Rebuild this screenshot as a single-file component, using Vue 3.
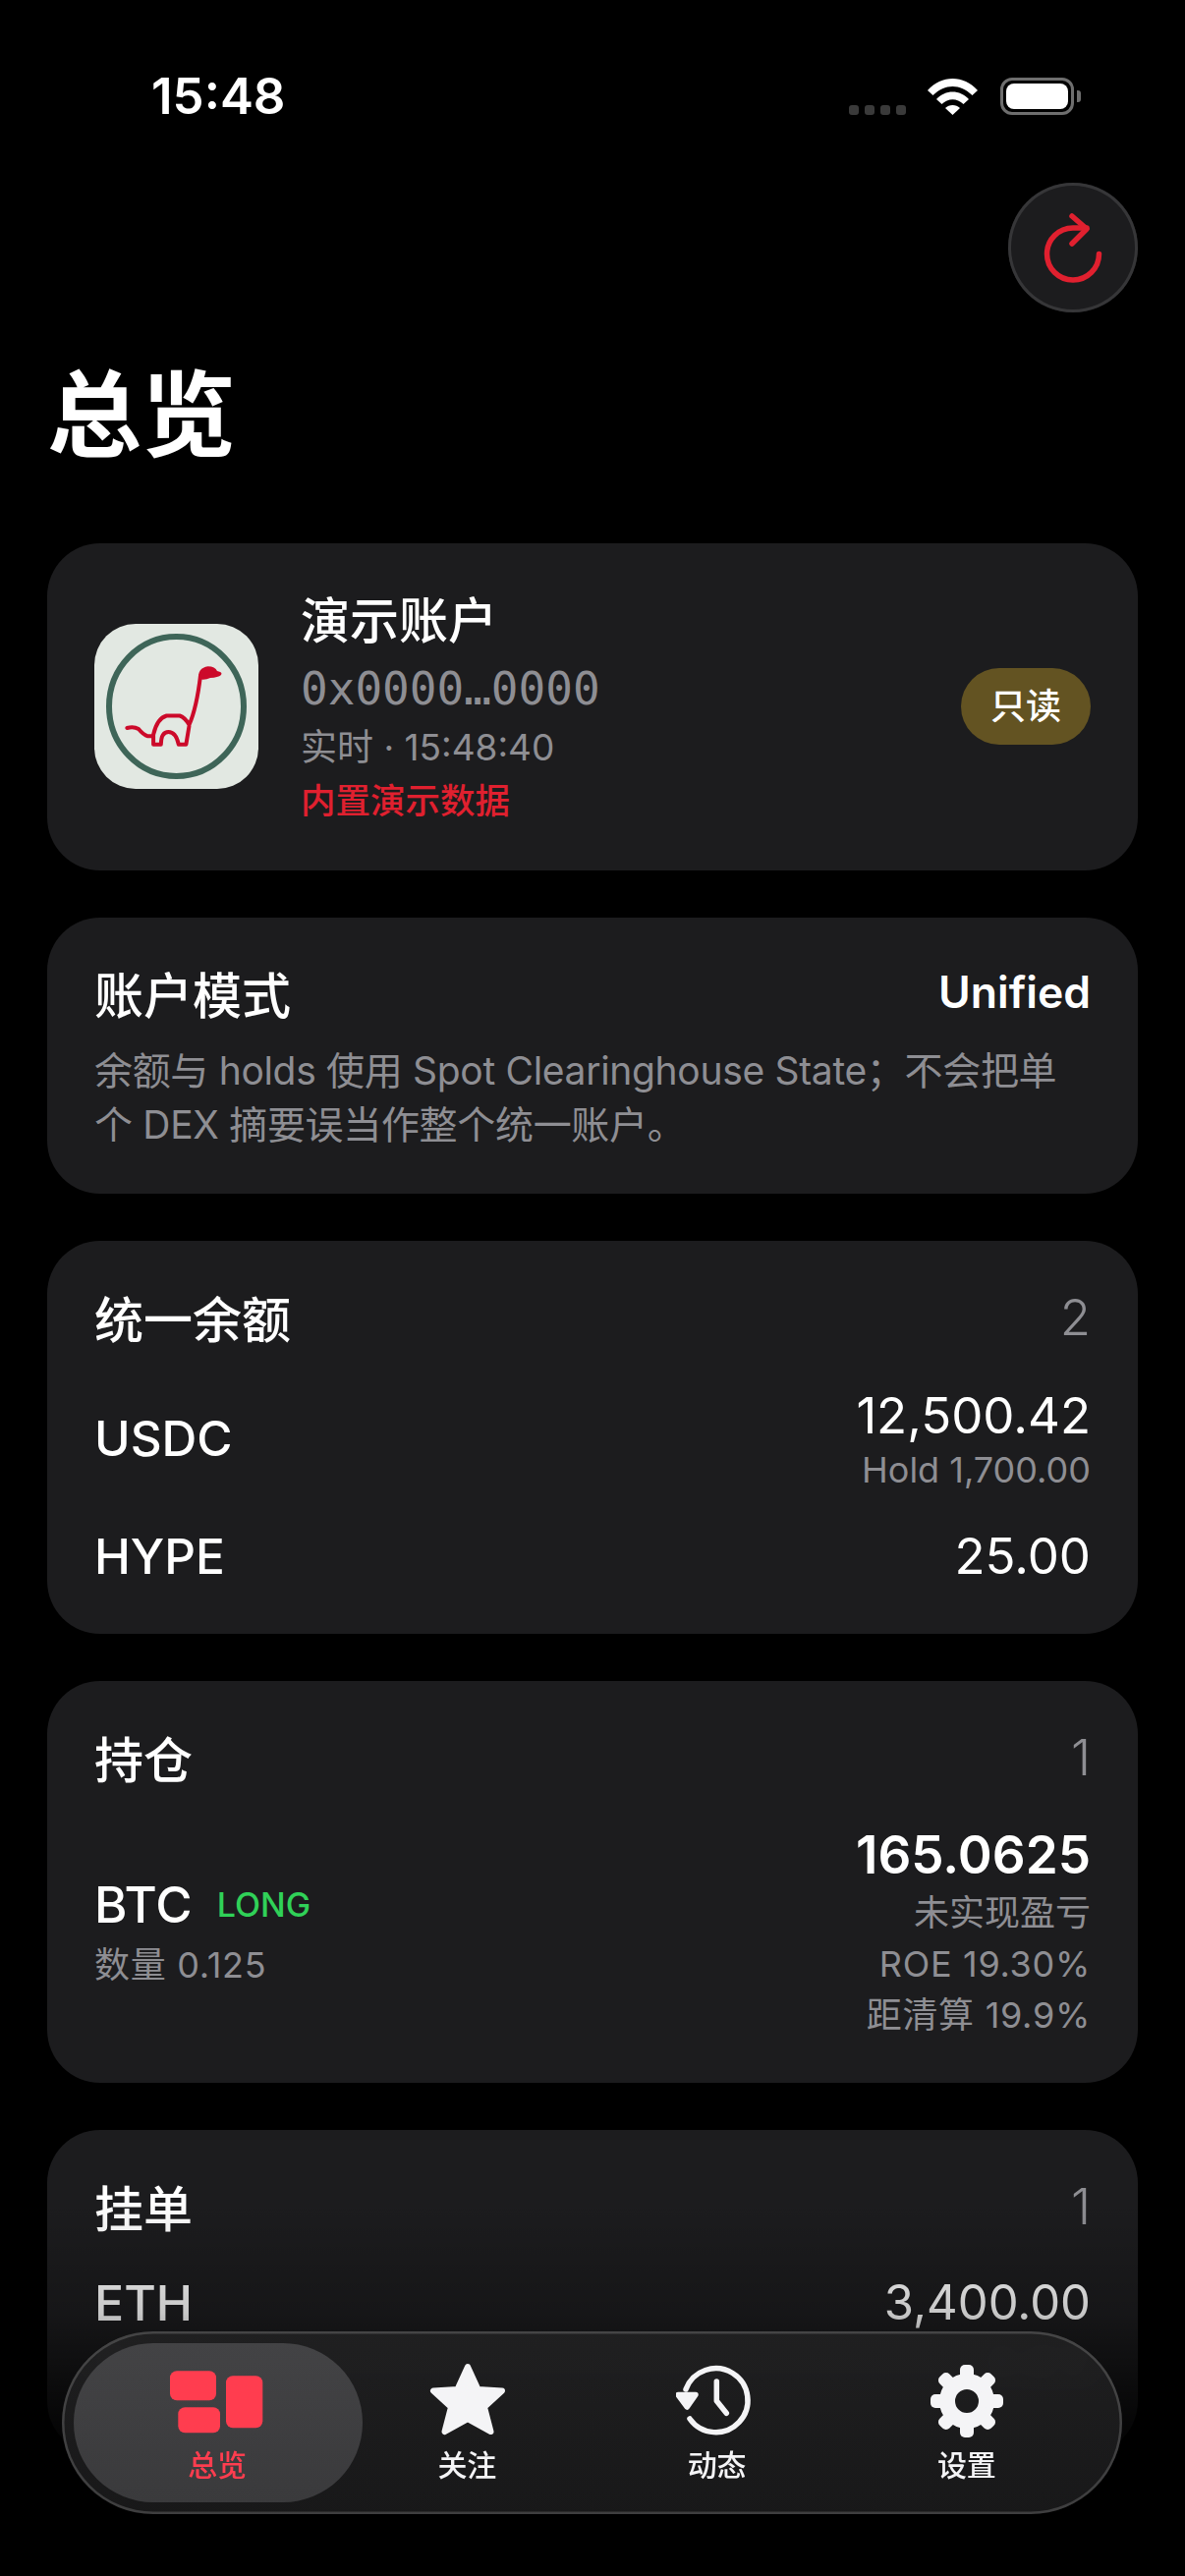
<script setup>
const tabs = [
  { label: '总览', icon: 'grid', active: true },
  { label: '关注', icon: 'star' },
  { label: '动态', icon: 'clock' },
  { label: '设置', icon: 'gear' },
]
const teeth = [0, 45, 90, 135, 180, 225, 270, 315]
</script>

<template>
  <div class="screen">
    <div class="status">
      <span class="time">15:48</span>
      <div class="status-right">
        <div class="dots"><i></i><i></i><i></i><i></i></div>
        <svg class="wifi" width="51" height="37" viewBox="0 0 51 37">
          <path d="M0 12C14-4 37-4 51 12L45.5 17C33 5 18 5 5.5 17Z" fill="#fff" />
          <path d="M9 21C18 11 33 11 42 21L36.5 26C30 19.5 21 19.5 14.5 26Z" fill="#fff" />
          <path d="M18 30C22 26 29 26 33 30L25.5 37Z" fill="#fff" />
        </svg>
        <div class="battery"><div class="battery-fill"></div></div>
        <div class="battery-nub"></div>
      </div>
    </div>

    <div class="top-actions">
      <button class="refresh">
        <svg width="132" height="132" viewBox="0 0 132 132" fill="none" stroke="#e0202f" stroke-width="5.5" stroke-linecap="round" stroke-linejoin="round">
          <path d="M92.5 72.5a26.5 26.5 0 1 1-26.5-26.5h14" />
          <path d="M65 34L80 47L65 62" />
        </svg>
      </button>
    </div>

    <h1 class="title">总览</h1>

    <div class="cards">
      <section class="card account">
        <div class="avatar">
          <svg width="167" height="168" viewBox="0 0 167 168" fill="none">
            <ellipse cx="83.5" cy="84" rx="68.5" ry="71" stroke="#3e6558" stroke-width="6" />
            <path d="M33.3 106Q40 104 45 107Q50 113 54.5 114.3H60.1M60.1 122.7V112.7Q64 96 73.5 93.5H86.9Q92 95 96.5 102.7Q104 86 108 52.7M60.1 122.7H67.8Q68 110 75.4 110Q83 110 85.8 122.7H93.4L96.5 104" stroke="#cc0a2a" stroke-width="4" stroke-linejoin="round" stroke-linecap="round" />
            <path d="M106 56Q105 45 115.6 43.3Q123 43.5 125 48Q131 49 129 52Q126 54.5 118 55Q112 58 106 56Z" fill="#cc0a2a" />
          </svg>
        </div>
        <div class="account-info">
          <div class="account-name">演示账户</div>
          <div class="address">0x0000…0000</div>
          <div class="live">实时 · 15:48:40</div>
          <div class="demo">内置演示数据</div>
        </div>
        <span class="badge">只读</span>
      </section>

      <section class="card mode">
        <div class="card-head">
          <span class="card-title">账户模式</span>
          <span class="mode-value">Unified</span>
        </div>
        <p class="mode-desc">余额与 holds 使用 Spot Clearinghouse State；不会把单个 DEX 摘要误当作整个统一账户。</p>
      </section>

      <section class="card balances">
        <div class="card-head">
          <span class="card-title">统一余额</span>
          <span class="count">2</span>
        </div>
        <div class="row usdc">
          <span class="coin">USDC</span>
          <div class="right">
            <div class="amount">12,500.42</div>
            <div class="sub">Hold 1,700.00</div>
          </div>
        </div>
        <div class="row hype">
          <span class="coin">HYPE</span>
          <div class="amount">25.00</div>
        </div>
      </section>

      <section class="card positions">
        <div class="card-head">
          <span class="card-title">持仓</span>
          <span class="count">1</span>
        </div>
        <div class="row btc">
          <div class="btc-left">
            <div class="btc-line"><span class="coin">BTC</span><span class="long">LONG</span></div>
            <div class="sub spaced">数量 0.125</div>
          </div>
          <div class="right">
            <div class="pnl">165.0625</div>
            <div class="sub line">未实现盈亏</div>
            <div class="sub line spaced">ROE 19.30%</div>
            <div class="sub line spaced">距清算 19.9%</div>
          </div>
        </div>
      </section>

      <section class="card orders">
        <div class="card-head">
          <span class="card-title">挂单</span>
          <span class="count">1</span>
        </div>
        <div class="row eth">
          <div>
            <div class="coin">ETH</div>
            <div class="sub">卖出 0.5</div>
          </div>
          <div class="right">
            <div class="amount">3,400.00</div>
            <div class="sub">未成交</div>
          </div>
        </div>
      </section>
    </div>

    <div class="fade"></div>

    <nav class="tabbar">
      <div class="lens"></div>
      <div v-for="tab in tabs" :key="tab.label" class="tab" :class="{ active: tab.active }">
        <svg v-if="tab.icon === 'grid'" class="tab-icon" width="100" height="84" viewBox="0 0 100 84" fill="#ff3d4f">
          <rect x="2" y="11.3" width="47" height="30" rx="7" />
          <rect x="10.3" y="48.3" width="42.7" height="26" rx="7" />
          <rect x="59" y="16.3" width="37.3" height="53" rx="7" />
        </svg>
        <svg v-else-if="tab.icon === 'star'" class="tab-icon" width="84" height="84" viewBox="-1 0 84 84" fill="#f4f4f6" stroke="#f4f4f6" stroke-width="6" stroke-linejoin="round">
          <path d="M42 7L52.5 30L77 31.5L59 48L65.5 73L42 60L18.5 73L25 48L7 31.5L31.5 30Z" />
        </svg>
        <svg v-else-if="tab.icon === 'clock'" class="tab-icon" width="84" height="84" viewBox="3 0 84 84" fill="none" stroke="#f4f4f6" stroke-width="5.5" stroke-linecap="round" stroke-linejoin="round">
          <path d="M17 60A32.5 32.5 0 1 0 13 30" />
          <path d="M5 35.5H23L14.3 48Z" fill="#f4f4f6" />
          <path d="M44.3 22V41.7L54.3 54.3" />
        </svg>
        <svg v-else class="tab-icon" width="84" height="84" viewBox="0 0 84 84" fill="none">
          <circle cx="42" cy="42" r="20" stroke="#f4f4f6" stroke-width="16" />
          <rect v-for="deg in teeth" :key="deg" x="35" y="5" width="14" height="20" rx="5" fill="#f4f4f6" :transform="`rotate(${deg} 42 42)`" />
        </svg>
        <span class="tab-label">{{ tab.label }}</span>
      </div>
    </nav>
  </div>
</template>

<style>
html, body {
  margin: 0;
  background: #000;
}
</style>

<style scoped>
.screen {
  position: relative;
  width: 1206px;
  height: 2622px;
  overflow: hidden;
  background: #000;
  color: #fff;
  font-family: Inter, "Noto Sans CJK SC", sans-serif;
}

.status {
  display: flex;
  justify-content: space-between;
  align-items: flex-start;
  height: 186px;
  box-sizing: border-box;
  padding: 68px 106px 0 154px;
}
.time {
  font-size: 51px;
  line-height: 60px;
  font-weight: 600;
}
.status-right {
  display: flex;
  align-items: flex-end;
  margin-top: 11px;
}
.dots {
  display: flex;
  gap: 6px;
  margin-right: 22px;
}
.dots i {
  width: 10px;
  height: 10px;
  border-radius: 3px;
  background: #3a3a3a;
}
.battery {
  width: 75px;
  height: 38px;
  box-sizing: border-box;
  border: 3px solid #6e6e6e;
  border-radius: 12px;
  padding: 3px;
  margin-left: 23px;
}
.battery-fill {
  height: 100%;
  background: #fff;
  border-radius: 8px;
}
.battery-nub {
  width: 4px;
  height: 12px;
  margin: 0 0 13px 3px;
  background: #6e6e6e;
  border-radius: 0 3px 3px 0;
}

.top-actions {
  display: flex;
  justify-content: flex-end;
  padding-right: 48px;
}
.refresh {
  width: 132px;
  height: 132px;
  padding: 0;
  border: 0;
  border-radius: 50%;
  background: #1c1c1e;
  box-shadow: inset 0 0 0 3px #363638;
}
.refresh svg {
  display: block;
}

.title {
  margin: 40px 0 0 48px;
  height: 195px;
  font-size: 96px;
  line-height: 128px;
  font-weight: 700;
}

.cards {
  display: flex;
  flex-direction: column;
  gap: 48px;
  padding: 0 48px;
}
.card {
  box-sizing: border-box;
  padding: 0 48px;
  background: #1c1c1e;
  border-radius: 54px;
}

.account {
  display: flex;
  align-items: center;
  height: 333px;
}
.avatar {
  flex: none;
  width: 167px;
  height: 168px;
  margin-top: -2px;
  border-radius: 42px;
  background: #e2e8e2;
}
.avatar svg {
  display: block;
}
.account-info {
  flex: 1;
  margin-left: 43px;
  margin-top: 3px;
}
.account-name {
  font-size: 50px;
  line-height: 66px;
  margin-top: -3px;
  font-weight: 500;
}
.address {
  font-family: "DejaVu Sans Mono", monospace;
  font-size: 46px;
  line-height: 60px;
  margin-top: 6px;
  color: #8e8e93;
}
.live {
  font-size: 37px;
  line-height: 60px;
  color: #8e8e93;
}
.demo {
  font-size: 35.5px;
  line-height: 50px;
  font-weight: 500;
  color: #e0202f;
}
.badge {
  flex: none;
  width: 132px;
  height: 78px;
  border-radius: 39px;
  background: #635322;
  font-size: 36px;
  font-weight: 500;
  line-height: 78px;
  text-align: center;
  margin-top: -2px;
}

.card-head {
  display: flex;
  justify-content: space-between;
  align-items: center;
  height: 68px;
}
.card-title {
  font-size: 50px;
  font-weight: 500;
}
.count {
  font-size: 51px;
  font-weight: 300;
  color: #8e8e93;
}

.mode {
  height: 281px;
  padding-top: 42px;
}
.mode-value {
  font-size: 44.5px;
  font-weight: 600;
}
.mode-desc {
  margin: 18px 0 0;
  font-size: 39px;
  line-height: 55px;
  letter-spacing: -0.32px;
  color: #8e8e93;
}

.balances {
  height: 400px;
  padding-top: 43px;
}
.row {
  display: flex;
  justify-content: space-between;
  align-items: center;
}
.right {
  text-align: right;
}
.coin {
  font-size: 49.5px;
  font-weight: 500;
}
.btc .coin {
  font-size: 51px;
}
.amount {
  font-size: 51px;
  line-height: 64px;
  font-weight: 400;
}
.sub {
  font-size: 36px;
  color: #8e8e93;
}
.spaced {
  letter-spacing: 0.7px;
}
.usdc {
  margin-top: 33px;
  height: 114px;
}
.usdc .sub {
  line-height: 46px;
}
.hype {
  margin-top: 29px;
  height: 68px;
}

.positions {
  height: 409px;
  padding-top: 43px;
}
.btc {
  margin-top: 33px;
  align-items: center;
}
.btc-line {
  display: flex;
  align-items: center;
  gap: 25px;
  height: 68px;
}
.btc-left .sub {
  line-height: 56px;
}
.long {
  font-size: 34px;
  font-weight: 500;
  color: #30d158;
}
.pnl {
  font-size: 53px;
  line-height: 66px;
  font-weight: 600;
}
.line {
  line-height: 52px;
}

.orders {
  height: 330px;
  padding-top: 43px;
}
.eth {
  margin-top: 31px;
  align-items: flex-start;
}
.eth .coin {
  font-size: 50px;
  line-height: 68px;
}
.eth .amount {
  font-size: 49px;
  line-height: 68px;
}

.fade {
  position: absolute;
  left: 0;
  right: 0;
  top: 2240px;
  height: 382px;
  background: linear-gradient(to bottom, rgba(0, 0, 0, 0), rgba(0, 0, 0, 0.22) 30%, rgba(0, 0, 0, 0.7) 55%, #000 72%);
}

.tabbar {
  position: absolute;
  left: 63px;
  top: 2373px;
  box-sizing: border-box;
  width: 1079px;
  height: 186px;
  padding: 0 31px;
  display: flex;
  border-radius: 93px;
  background: linear-gradient(rgba(33, 33, 34, 0.93), rgba(26, 26, 27, 0.93));
  backdrop-filter: blur(8px);
  box-shadow: inset 0 0 0 2.5px rgba(255, 255, 255, 0.17);
}
.lens {
  position: absolute;
  left: 12px;
  top: 12px;
  width: 294px;
  height: 162px;
  border-radius: 81px;
  background: linear-gradient(#434345, #3a3a3c);
}
.tab {
  position: relative;
  flex: 1;
  display: flex;
  flex-direction: column;
  align-items: center;
  color: #f4f4f6;
}
.tab-icon {
  display: block;
  margin-top: 29px;
}
.tab-label {
  font-size: 30px;
  line-height: 40px;
  font-weight: 500;
  margin-top: 3px;
}
.tab.active {
  color: #ff3d4f;
}
</style>
